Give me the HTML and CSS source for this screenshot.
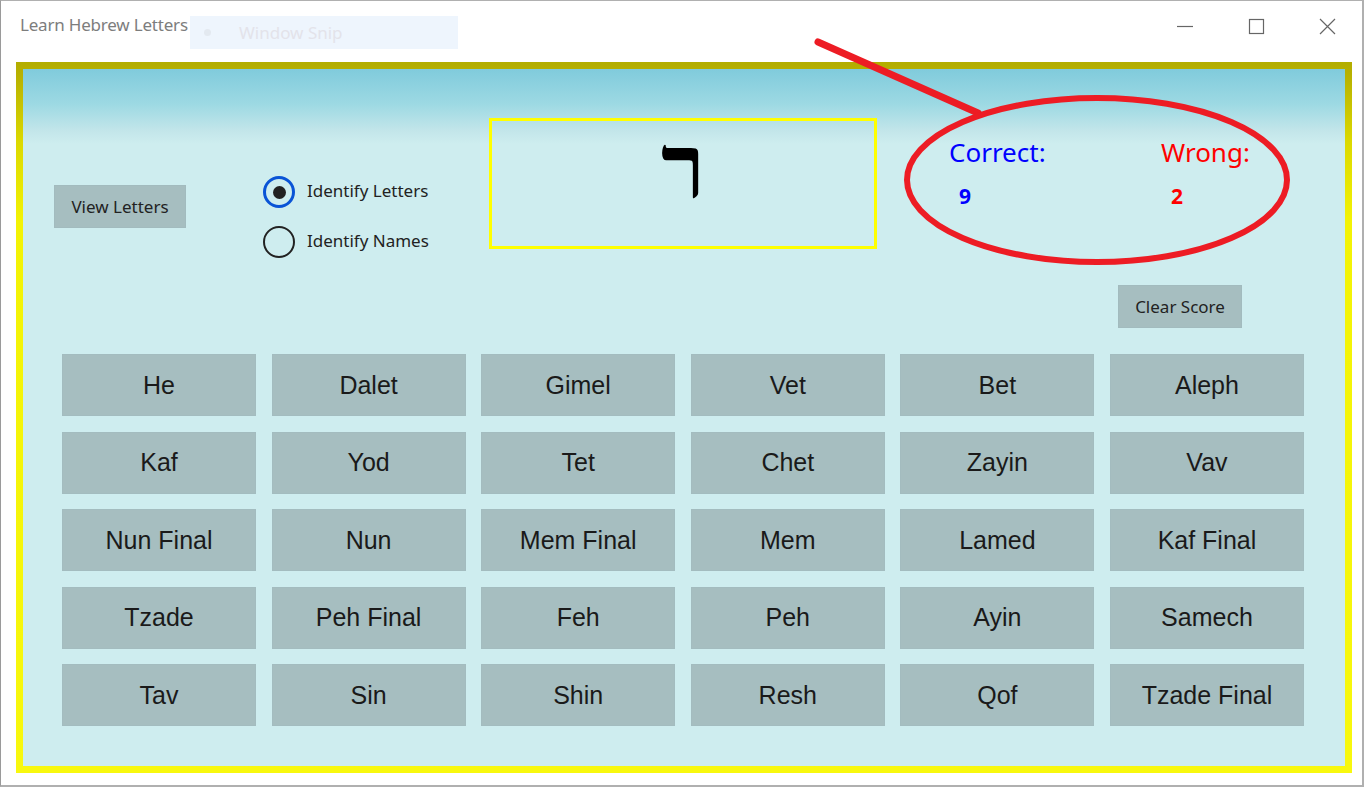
FILE: index.html
```html
<!DOCTYPE html>
<html>
<head>
<meta charset="utf-8">
<link rel="stylesheet" href="styles.css">
</head>
<body>
<div class="window">
  <div class="titlebar">
    <span class="title">Learn Hebrew Letters</span>
    <div class="snip"><span class="snip-dot"></span><span class="snip-text">Window Snip</span></div>
    <div class="controls">
      <svg class="ctl" width="46" height="30" viewBox="0 0 46 30"><line x1="15" y1="15.5" x2="31" y2="15.5" stroke="#666" stroke-width="1.2"/></svg>
      <svg class="ctl" width="46" height="30" viewBox="0 0 46 30"><rect x="16.5" y="8.5" width="14" height="14" fill="none" stroke="#666" stroke-width="1.2"/></svg>
      <svg class="ctl" width="46" height="30" viewBox="0 0 46 30"><path d="M16 8 L31 23 M31 8 L16 23" stroke="#666" stroke-width="1.2"/></svg>
    </div>
  </div>
  <div class="frame">
    <div class="inner">
      <div class="top">
        <div class="btn view-btn">View Letters</div>
        <div class="radios">
          <div class="radio-row"><span class="radio checked"><span class="dot"></span></span><span class="radio-label">Identify Letters</span></div>
          <div class="radio-row"><span class="radio"></span><span class="radio-label">Identify Names</span></div>
        </div>
        <div class="letter-box"><span class="letter">ר</span></div>
        <div class="score">
          <span class="lbl correct">Correct:</span>
          <span class="lbl wrong">Wrong:</span>
          <span class="num correct">9</span>
          <span class="num wrong">2</span>
        </div>
      </div>
      <div class="clear-row"><div class="btn clear-btn">Clear Score</div></div>
      <div class="grid">
        <div class="cell">He</div><div class="cell">Dalet</div><div class="cell">Gimel</div><div class="cell">Vet</div><div class="cell">Bet</div><div class="cell">Aleph</div>
        <div class="cell">Kaf</div><div class="cell">Yod</div><div class="cell">Tet</div><div class="cell">Chet</div><div class="cell">Zayin</div><div class="cell">Vav</div>
        <div class="cell">Nun Final</div><div class="cell">Nun</div><div class="cell">Mem Final</div><div class="cell">Mem</div><div class="cell">Lamed</div><div class="cell">Kaf Final</div>
        <div class="cell">Tzade</div><div class="cell">Peh Final</div><div class="cell">Feh</div><div class="cell">Peh</div><div class="cell">Ayin</div><div class="cell">Samech</div>
        <div class="cell">Tav</div><div class="cell">Sin</div><div class="cell">Shin</div><div class="cell">Resh</div><div class="cell">Qof</div><div class="cell">Tzade Final</div>
      </div>
    </div>
  </div>
  <svg class="annotation" width="1364" height="787" viewBox="0 0 1364 787">
    <line x1="818" y1="42" x2="978" y2="113" stroke="#ed1c24" stroke-width="7" stroke-linecap="round"/>
    <ellipse cx="1097" cy="180" rx="190" ry="82" fill="none" stroke="#ed1c24" stroke-width="6"/>
  </svg>
</div>
</body>
</html>
```
FILE: styles.css
```css
* { box-sizing: border-box; }
html, body { margin: 0; padding: 0; background: #ffffff; }
body { font-family: "Noto Sans", "Open Sans", sans-serif; }

.window {
  position: relative;
  width: 1364px;
  height: 787px;
  border-left: 1px solid #9a9a9a;
  border-top: 1px solid #b0b0b0;
  border-right: 2px solid #b0b0b0;
  border-bottom: 2px solid #b0b0b0;
  background: #ffffff;
  overflow: hidden;
}

.titlebar {
  height: 61px;
  display: flex;
  align-items: flex-start;
  position: relative;
}
.title {
  margin: 12px 0 0 19px;
  font-size: 17px;
  color: #7d7d7d;
  letter-spacing: -0.2px;
}
.snip {
  position: absolute;
  left: 189px;
  top: 15px;
  width: 268px;
  height: 33px;
  background: #eef5fd;
  display: flex;
  align-items: center;
}
.snip-dot {
  width: 7px; height: 7px; border-radius: 50%;
  background: #e3e9f0;
  margin-left: 14px;
}
.snip-text {
  margin-left: 28px;
  font-size: 17px;
  color: #e3e3ea;
}
.controls {
  margin-left: auto;
  margin-top: 10px;
  margin-right: 12px;
  display: flex;
  gap: 25px;
}
.ctl { display: block; }

.frame {
  margin: 0 10px 0 15px;
  height: 711px;
  padding: 7px;
  background: linear-gradient(to bottom, #b3ad00 0px, #b8b200 14px, #dcd900 80px, #f3f305 160px, #f8f80e 100%);
}
.inner {
  height: 100%;
  background: linear-gradient(to bottom, #80cbdc 0px, #9dd9e3 35px, #c3e6ea 62px, #ceedef 75px, #ceedef 100%);
  padding: 0 40px 0 39px;
  display: flex;
  flex-direction: column;
}

.top {
  display: flex;
  align-items: flex-start;
  height: 180px;
}
.btn {
  background: #a6bec0;
  color: #222;
  font-size: 17px;
  display: flex;
  align-items: center;
  justify-content: center;
  border: 1px solid #a2bbbe;
}
.view-btn {
  margin-left: -8px;
  margin-top: 116px;
  width: 132px;
  height: 43px;
}
.radios {
  margin-left: 77px;
  margin-top: 107px;
  width: 170px;
  display: flex;
  flex-direction: column;
  gap: 18px;
}
.radio-row {
  display: flex;
  align-items: center;
  height: 32px;
}
.radio {
  flex: none;
  width: 32px; height: 32px;
  border-radius: 50%;
  border: 2.5px solid #222;
  display: flex;
  align-items: center;
  justify-content: center;
}
.radio.checked { border: 3px solid #0a54d6; }
.dot { width: 13px; height: 13px; border-radius: 50%; background: #222; }
.radio-label {
  margin-left: 12px;
  font-size: 17px;
  color: #222;
  margin-top: -3px;
  white-space: nowrap;
}
.letter-box {
  margin-left: 56px;
  margin-top: 49px;
  width: 388px;
  height: 131px;
  border: 3px solid #ffff00;
  display: flex;
  justify-content: center;
  align-items: flex-start;
}
.letter {
  font-family: "Liberation Serif", "DejaVu Serif", serif;
  font-weight: bold;
  font-size: 90px;
  line-height: 1;
  margin-top: 2px;
  margin-left: 0px;
  color: #000;
}
.score {
  margin-left: 72px;
  margin-top: 67px;
  display: grid;
  grid-template-columns: 212px auto;
  row-gap: 13px;
}
.lbl { font-size: 26px; line-height: 32px; }
.num { font-size: 21px; font-weight: bold; padding-left: 10px; line-height: 30px; }
.correct { color: #0000ff; }
.wrong { color: #ff0000; }

.clear-row {
  display: flex;
  justify-content: flex-end;
  margin-top: 36px;
  padding-right: 63px;
}
.clear-btn { width: 124px; height: 43px; }

.grid {
  margin-top: 26px;
  display: grid;
  grid-template-columns: repeat(6, 194px);
  grid-auto-rows: 62px;
  column-gap: 15.6px;
  row-gap: 15.5px;
}
.cell {
  background: #a6bec0;
  border: 1px solid #a3bcbf;
  font-family: "Liberation Sans", Arial, sans-serif;
  font-size: 25px;
  color: #1a1a1a;
  display: flex;
  align-items: center;
  justify-content: center;
}

.annotation {
  position: absolute;
  left: -1px;
  top: -1px;
  pointer-events: none;
}
```
